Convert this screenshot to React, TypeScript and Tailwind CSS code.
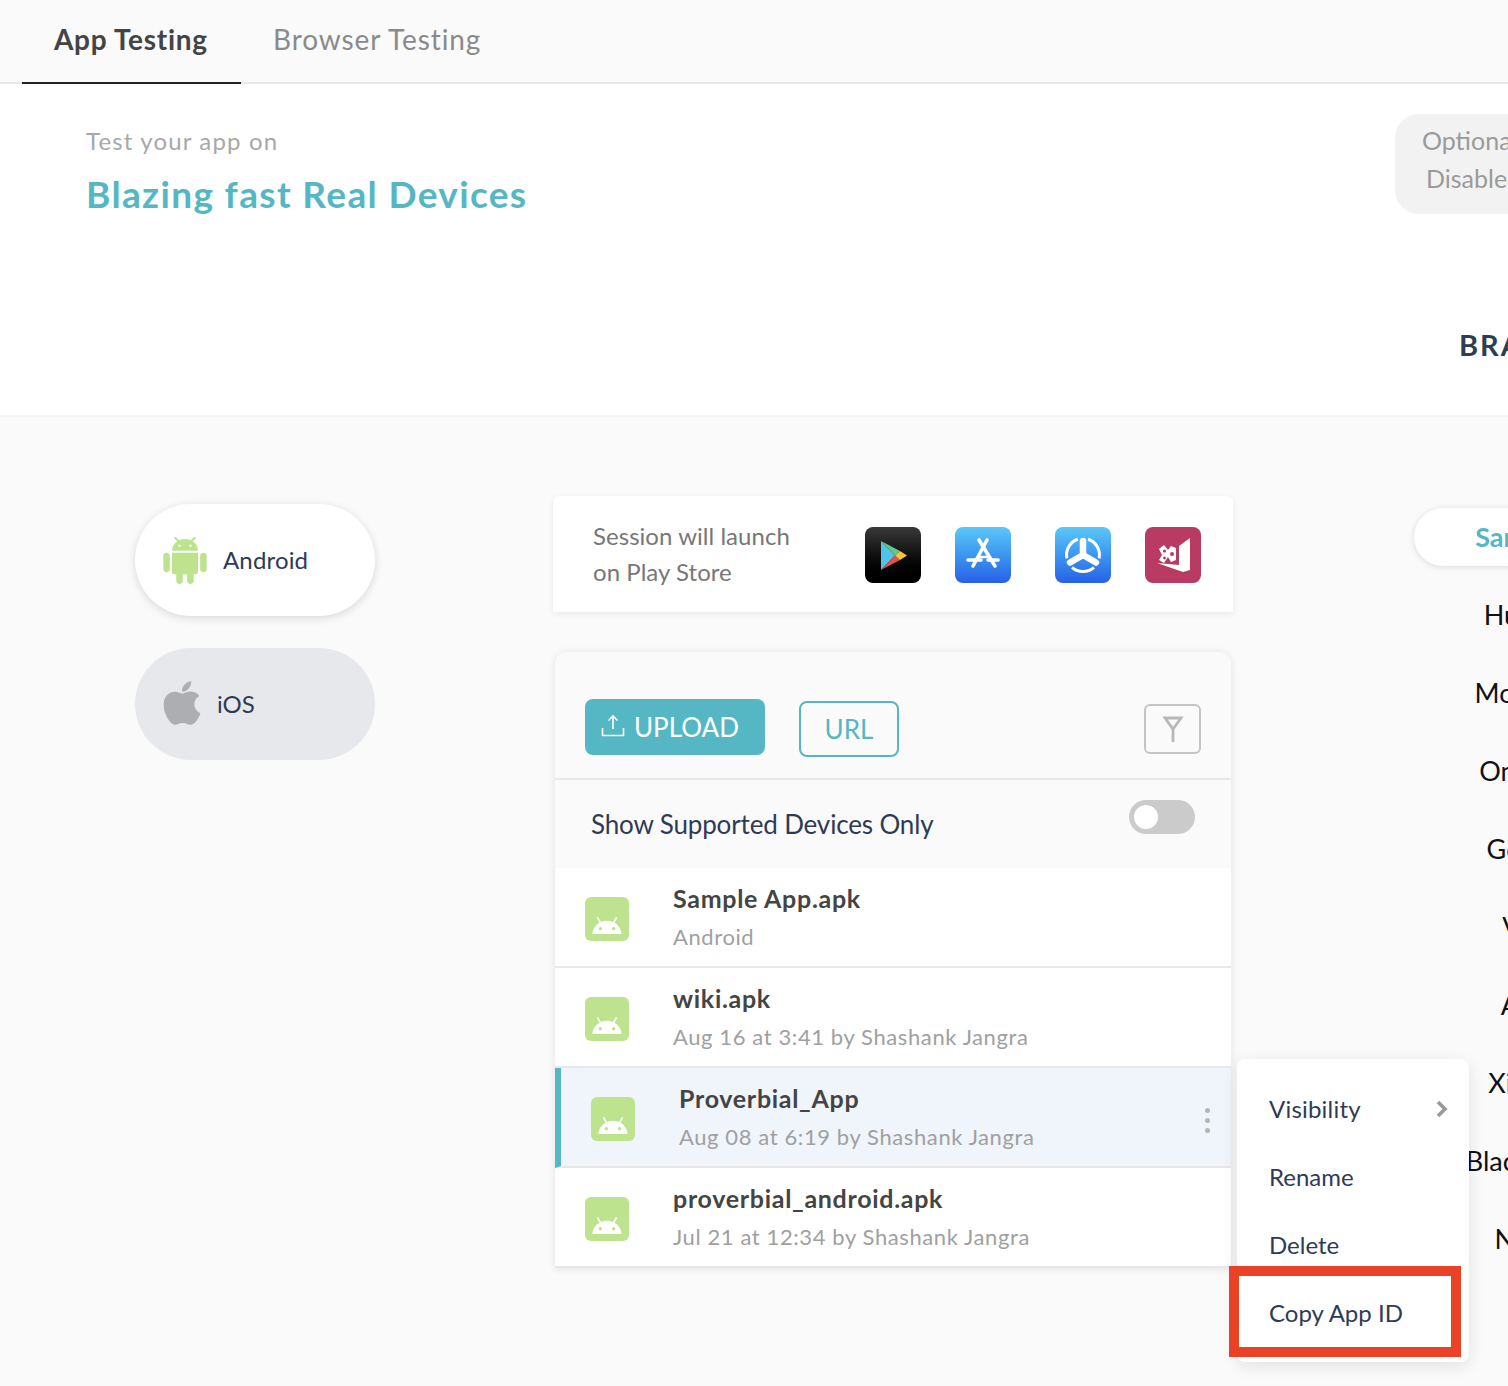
import { FaApple } from "react-icons/fa";

const ANDROID_FULL =
  "M6 18c0 .55.45 1 1 1h1v3.5c0 .83.67 1.5 1.5 1.5s1.5-.67 1.5-1.5V19h2v3.5c0 .83.67 1.5 1.5 1.5s1.5-.67 1.5-1.5V19h1c.55 0 1-.45 1-1V8H6v10zM3.5 8C2.67 8 2 8.67 2 9.5v7c0 .83.67 1.5 1.5 1.5S5 17.33 5 16.5v-7C5 8.67 4.33 8 3.5 8zm17 0c-.83 0-1.5.67-1.5 1.5v7c0 .83.67 1.5 1.5 1.5s1.5-.67 1.5-1.5v-7c0-.83-.67-1.5-1.5-1.5zm-4.97-5.84l1.3-1.3c.2-.2.2-.51 0-.71-.2-.2-.51-.2-.71 0l-1.48 1.48C13.85 1.23 12.95 1 12 1c-.96 0-1.86.23-2.66.63L7.85.15c-.2-.2-.51-.2-.71 0-.2.2-.2.51 0 .71l1.31 1.31C6.97 3.26 6 5.01 6 7h12c0-1.99-.97-3.75-2.47-4.84zM10 5H9V4h1v1zm5 0h-1V4h1v1z";
const ANDROID_HEAD =
  "M17.6 9.48l1.84-3.18c.16-.31.04-.69-.26-.85-.29-.15-.65-.06-.83.22l-1.88 3.24c-2.86-1.21-6.08-1.21-8.94 0L5.65 5.67c-.19-.29-.58-.38-.87-.2-.28.18-.37.54-.22.83L6.4 9.48C3.3 11.25 1.28 14.44 1 18h22c-.28-3.56-2.3-6.75-5.4-8.52zM7 15.25c-.69 0-1.25-.56-1.25-1.25s.56-1.25 1.25-1.25 1.25.56 1.25 1.25-.56 1.25-1.25 1.25zm10 0c-.69 0-1.25-.56-1.25-1.25s.56-1.25 1.25-1.25 1.25.56 1.25 1.25-.56 1.25-1.25 1.25z";

const brands = ["Huawei", "Motorola", "OnePlus", "Google", "Vivo", "Asus", "Xiaomi", "Blackberry", "Nokia"];

const apps = [
  { name: "Sample App.apk", sub: "Android" },
  { name: "wiki.apk", sub: "Aug 16 at 3:41 by Shashank Jangra" },
  { name: "Proverbial_App", sub: "Aug 08 at 6:19 by Shashank Jangra", active: true },
  { name: "proverbial_android.apk", sub: "Jul 21 at 12:34 by Shashank Jangra" },
];

function PlayIcon() {
  return (
    <div className="w-14 h-14 rounded-lg bg-gradient-to-b from-[#3a3a3a] to-black">
      <svg viewBox="0 0 56 56" className="w-14 h-14">
        <path d="M16 14 30 28.5 16 43Z" fill="#4fc3e8" />
        <path d="M16 14 35 24 30 28.5Z" fill="#5fc98a" />
        <path d="M16 43 35 33 30 28.5Z" fill="#e2504e" />
        <path d="M35 24 42 28.5 35 33 30 28.5Z" fill="#f6c33d" />
      </svg>
    </div>
  );
}

function AppStoreIcon() {
  return (
    <div className="w-14 h-14 rounded-lg bg-gradient-to-b from-[#5cc8f8] to-[#2a5fe6]">
      <svg viewBox="0 0 56 56" className="w-14 h-14" fill="none" stroke="#fff" strokeLinecap="round">
        <path d="M24 13 40 39" strokeWidth="3.6" />
        <path d="M32 13 18 39" strokeWidth="3.6" />
        <path d="M13 33H26M33 33H43" strokeWidth="3.6" />
        <path d="M24 30H32" strokeWidth="2.4" />
      </svg>
    </div>
  );
}

function WheelIcon() {
  return (
    <div className="w-14 h-14 rounded-lg bg-gradient-to-b from-[#5cc8f8] to-[#2a5fe6]">
      <svg viewBox="0 0 56 56" className="w-14 h-14" fill="none" stroke="#fff">
        <path
          d="M33.1 12.3A16.5 16.5 0 0 1 44.1 31.4M39 40.3A16.5 16.5 0 0 1 17 40.3M11.9 31.4A16.5 16.5 0 0 1 22.9 12.3"
          strokeWidth="3"
        />
        <path d="M28 28V14M28 28 15 35.5M28 28 41 35.5" strokeWidth="6.5" strokeLinecap="round" />
      </svg>
    </div>
  );
}

function StudioIcon() {
  return (
    <div className="w-14 h-14 rounded-lg bg-[#b93a62]">
      <svg viewBox="0 0 56 56" className="w-14 h-14" fill="#fff">
        <path d="M45 11 34 19V38L12 36 38 45 45 43Z" />
        <path d="M14 22 19 18 23 23 26 19 31 21V33L26 35 23 30 19 36 14 33 17 28Z" />
        <circle cx="19.5" cy="24" r="1.6" fill="#b93a62" />
        <circle cx="27" cy="27" r="2" fill="#b93a62" />
        <circle cx="19.5" cy="31" r="1.4" fill="#b93a62" />
      </svg>
    </div>
  );
}

function AppRow({ name, sub, active }: { name: string; sub: string; active?: boolean }) {
  return (
    <div
      className={
        active
          ? "relative h-[100px] flex items-center pl-[30px] pr-[20px] bg-[#f0f4fb] border-l-[6px] border-l-[#55b7c4] border-b-2 border-b-[#e8e8e8]"
          : "h-[100px] flex items-center pl-[30px] pr-[20px] bg-white border-b-2 border-b-[#e8e8e8]"
      }
    >
      <div className="mt-[4px] w-11 h-11 rounded-md bg-[#bde38f] flex items-center justify-center shrink-0">
        <svg viewBox="0 0 24 24" className="w-8 h-8 mt-[13px]" fill="#fff">
          <path d={ANDROID_HEAD} />
        </svg>
      </div>
      <div className="ml-11 flex-1">
        <p className="text-[25px] leading-9 font-bold text-[#444] tracking-[0.7px]">{name}</p>
        <p className="text-[22px] leading-9 mt-[3px] text-[#a0a0a0] tracking-[0.6px]">{sub}</p>
      </div>
      {active && (
        <div className="flex flex-col gap-[5px] mt-[6px] mr-[1px]">
          <span className="w-[5px] h-[5px] rounded-full bg-[#b5b5b5]" />
          <span className="w-[5px] h-[5px] rounded-full bg-[#b5b5b5]" />
          <span className="w-[5px] h-[5px] rounded-full bg-[#b5b5b5]" />
        </div>
      )}
    </div>
  );
}

export default function App() {
  return (
    <div className="relative w-[1508px] h-[1386px] overflow-hidden bg-[#fafafa] font-['Lato',sans-serif]">
      {/* tabs */}
      <div className="h-[84px] flex pl-[22px] border-b-2 border-[#e8e8e8]">
        <div className="h-[84px] w-[219px] pl-[32px] pt-[21px] border-b-2 border-[#222] text-[28px] leading-9 font-bold text-[#444] tracking-[0.7px]">
          App Testing
        </div>
        <div className="ml-[32px] pt-[21px] text-[28px] leading-9 text-[#8a8a8a] tracking-[0.9px]">Browser Testing</div>
      </div>

      {/* hero */}
      <div className="h-[333px] bg-white flex border-b-2 border-[#f4f4f4]">
        <div className="w-[1395px] shrink-0 pl-[86px] pt-[41px]">
          <p className="text-[24px] leading-8 text-[#a8a8a8] tracking-[1.15px]">Test your app on</p>
          <p className="mt-[13px] text-[37px] leading-[48px] font-bold text-[#55b7c4] tracking-[1.35px]">
            Blazing fast Real Devices
          </p>
        </div>
        <div className="w-[113px] shrink-0 pt-[30px]">
          <div className="w-[300px] h-[100px] rounded-3xl bg-[#f2f2f2] text-[25px] leading-[38px] text-[#9a9a9a] pl-[27px] pt-[7px]">
            <p>Optional Features</p>
            <p className="pl-[4px]">Disabled</p>
          </div>
          <p className="mt-[113px] ml-[64px] text-[29px] leading-9 font-bold tracking-[2px] text-[#2d3e50] whitespace-nowrap">
            BRANDS
          </p>
        </div>
      </div>

      {/* main */}
      <div className="flex items-start pl-[135px] pt-[79px]">
        <div className="w-[240px] shrink-0 pt-[8px] flex flex-col gap-8">
          <div className="h-28 rounded-[56px] bg-white shadow-[0_2px_8px_rgba(0,0,0,0.14)] flex items-center pl-7">
            <svg viewBox="0 0 24 24" preserveAspectRatio="none" className="w-[52px] h-[47px] -ml-[4px]" fill="#bde38f">
              <path d={ANDROID_FULL} />
            </svg>
            <span className="ml-[12px] text-[24px] tracking-[0.15px] text-[#2f3b55]">Android</span>
          </div>
          <div className="h-28 rounded-[56px] bg-[#e6e8ec] flex items-center pl-7">
            <FaApple className="w-[38px] h-[50px] text-[#acaeb2] -mt-[2px]" />
            <span className="ml-[16px] text-[24px] text-[#2f3b55]">iOS</span>
          </div>
        </div>

        <div className="w-[680px] ml-[178px] shrink-0">
          <div className="h-[116px] bg-white shadow-[0_2px_6px_rgba(0,0,0,0.08)] flex items-center pl-10 pt-[2px] rounded-t-md">
            <div className="w-[272px] text-[24px] leading-9 text-[#777] tracking-[0.04px] -mt-[3px]">
              <p>Session will launch</p>
              <p>on Play Store</p>
            </div>
            <PlayIcon />
            <div className="ml-[34px]">
              <AppStoreIcon />
            </div>
            <div className="ml-[44px]">
              <WheelIcon />
            </div>
            <div className="ml-[34px]">
              <StudioIcon />
            </div>
          </div>

          <div className="mt-10 mx-[2px] rounded-t-xl shadow-[0_1px_8px_rgba(0,0,0,0.1)] overflow-hidden">
            <div className="h-[128px] flex items-start pl-[30px] pr-[30px] pt-[47px] border-b-2 border-[#e8e8e8]">
              <button className="h-14 w-[180px] rounded-lg bg-[#55b7c4] text-white flex items-center pl-[16px] text-[26px]">
                <svg viewBox="0 0 24 24" className="w-[24px] h-[24px] -mt-[3px]" fill="none" stroke="#fff" strokeWidth="1.6">
                  <path d="M12 15V2M7.5 6.5 12 2l4.5 4.5M1.5 14v7.5h21V14" />
                </svg>
                <span className="ml-[9px]">UPLOAD</span>
              </button>
              <button className="mt-[2px] ml-[34px] h-14 w-[100px] rounded-lg border-2 border-[#55b7c4] text-[#55b7c4] text-[26px]">
                URL
              </button>
              <button className="mt-[5px] ml-auto w-[57px] h-[50px] rounded-md border-2 border-[#c4c4c4] flex items-center justify-center">
                <svg viewBox="0 0 24 28" className="w-[24px] h-[28px]" fill="none" stroke="#b8b8b8" strokeWidth="2.8">
                  <path d="M4 3h16l-8 11ZM12 14v13" />
                </svg>
              </button>
            </div>
            <div className="h-[88px] flex items-start pl-9 pr-9">
              <span className="mt-[26px] text-[26px] leading-9 text-[#2f3b55] tracking-[-0.15px]">Show Supported Devices Only</span>
              <div className="ml-auto mt-[20px] w-[66px] h-[34px] rounded-full bg-[#cbcbcb] pl-[5px] pt-[5px]">
                <div className="w-6 h-6 rounded-full bg-white" />
              </div>
            </div>
            {apps.map((a) => (
              <AppRow key={a.name} name={a.name} sub={a.sub} active={a.active} />
            ))}
          </div>
        </div>

        <div className="w-[230px] ml-[181px] shrink-0 pt-[12px]">
          <div className="h-[58px] rounded-[29px] bg-white shadow-[0_1px_6px_rgba(0,0,0,0.13)] flex items-center justify-center text-[27px] font-bold text-[#55b7c4]">
            Samsung
          </div>
          <div className="mt-[10px] flex flex-col">
            {brands.map((b) => (
              <div key={b} className="h-[78px] flex items-center justify-center text-[27px] text-[#111]">
                {b}
              </div>
            ))}
          </div>
        </div>
      </div>

      {/* context menu */}
      <div className="absolute left-[1237px] top-[1059px] w-[232px] h-[303px] rounded-lg bg-white shadow-[0_4px_16px_rgba(0,0,0,0.1)] pt-[16px] text-[24px] text-[#2f3b55]">
        <div className="h-[68px] flex items-center pl-8 pr-[21px] justify-between">
          <span className="tracking-[0.2px]">Visibility</span>
          <svg viewBox="0 0 12 18" className="w-[12px] h-[18px]" fill="none" stroke="#9a9a9a" strokeWidth="3.6">
            <path d="M2 2l7 7-7 7" />
          </svg>
        </div>
        <div className="h-[68px] flex items-center pl-8">Rename</div>
        <div className="h-[68px] flex items-center pl-8">Delete</div>
        <div className="h-[68px] flex items-center pl-8">Copy App ID</div>
      </div>
      <div className="absolute left-[1229px] top-[1266px] w-[232px] h-[91px] border-[10px] border-[#e94227]" />
    </div>
  );
}
